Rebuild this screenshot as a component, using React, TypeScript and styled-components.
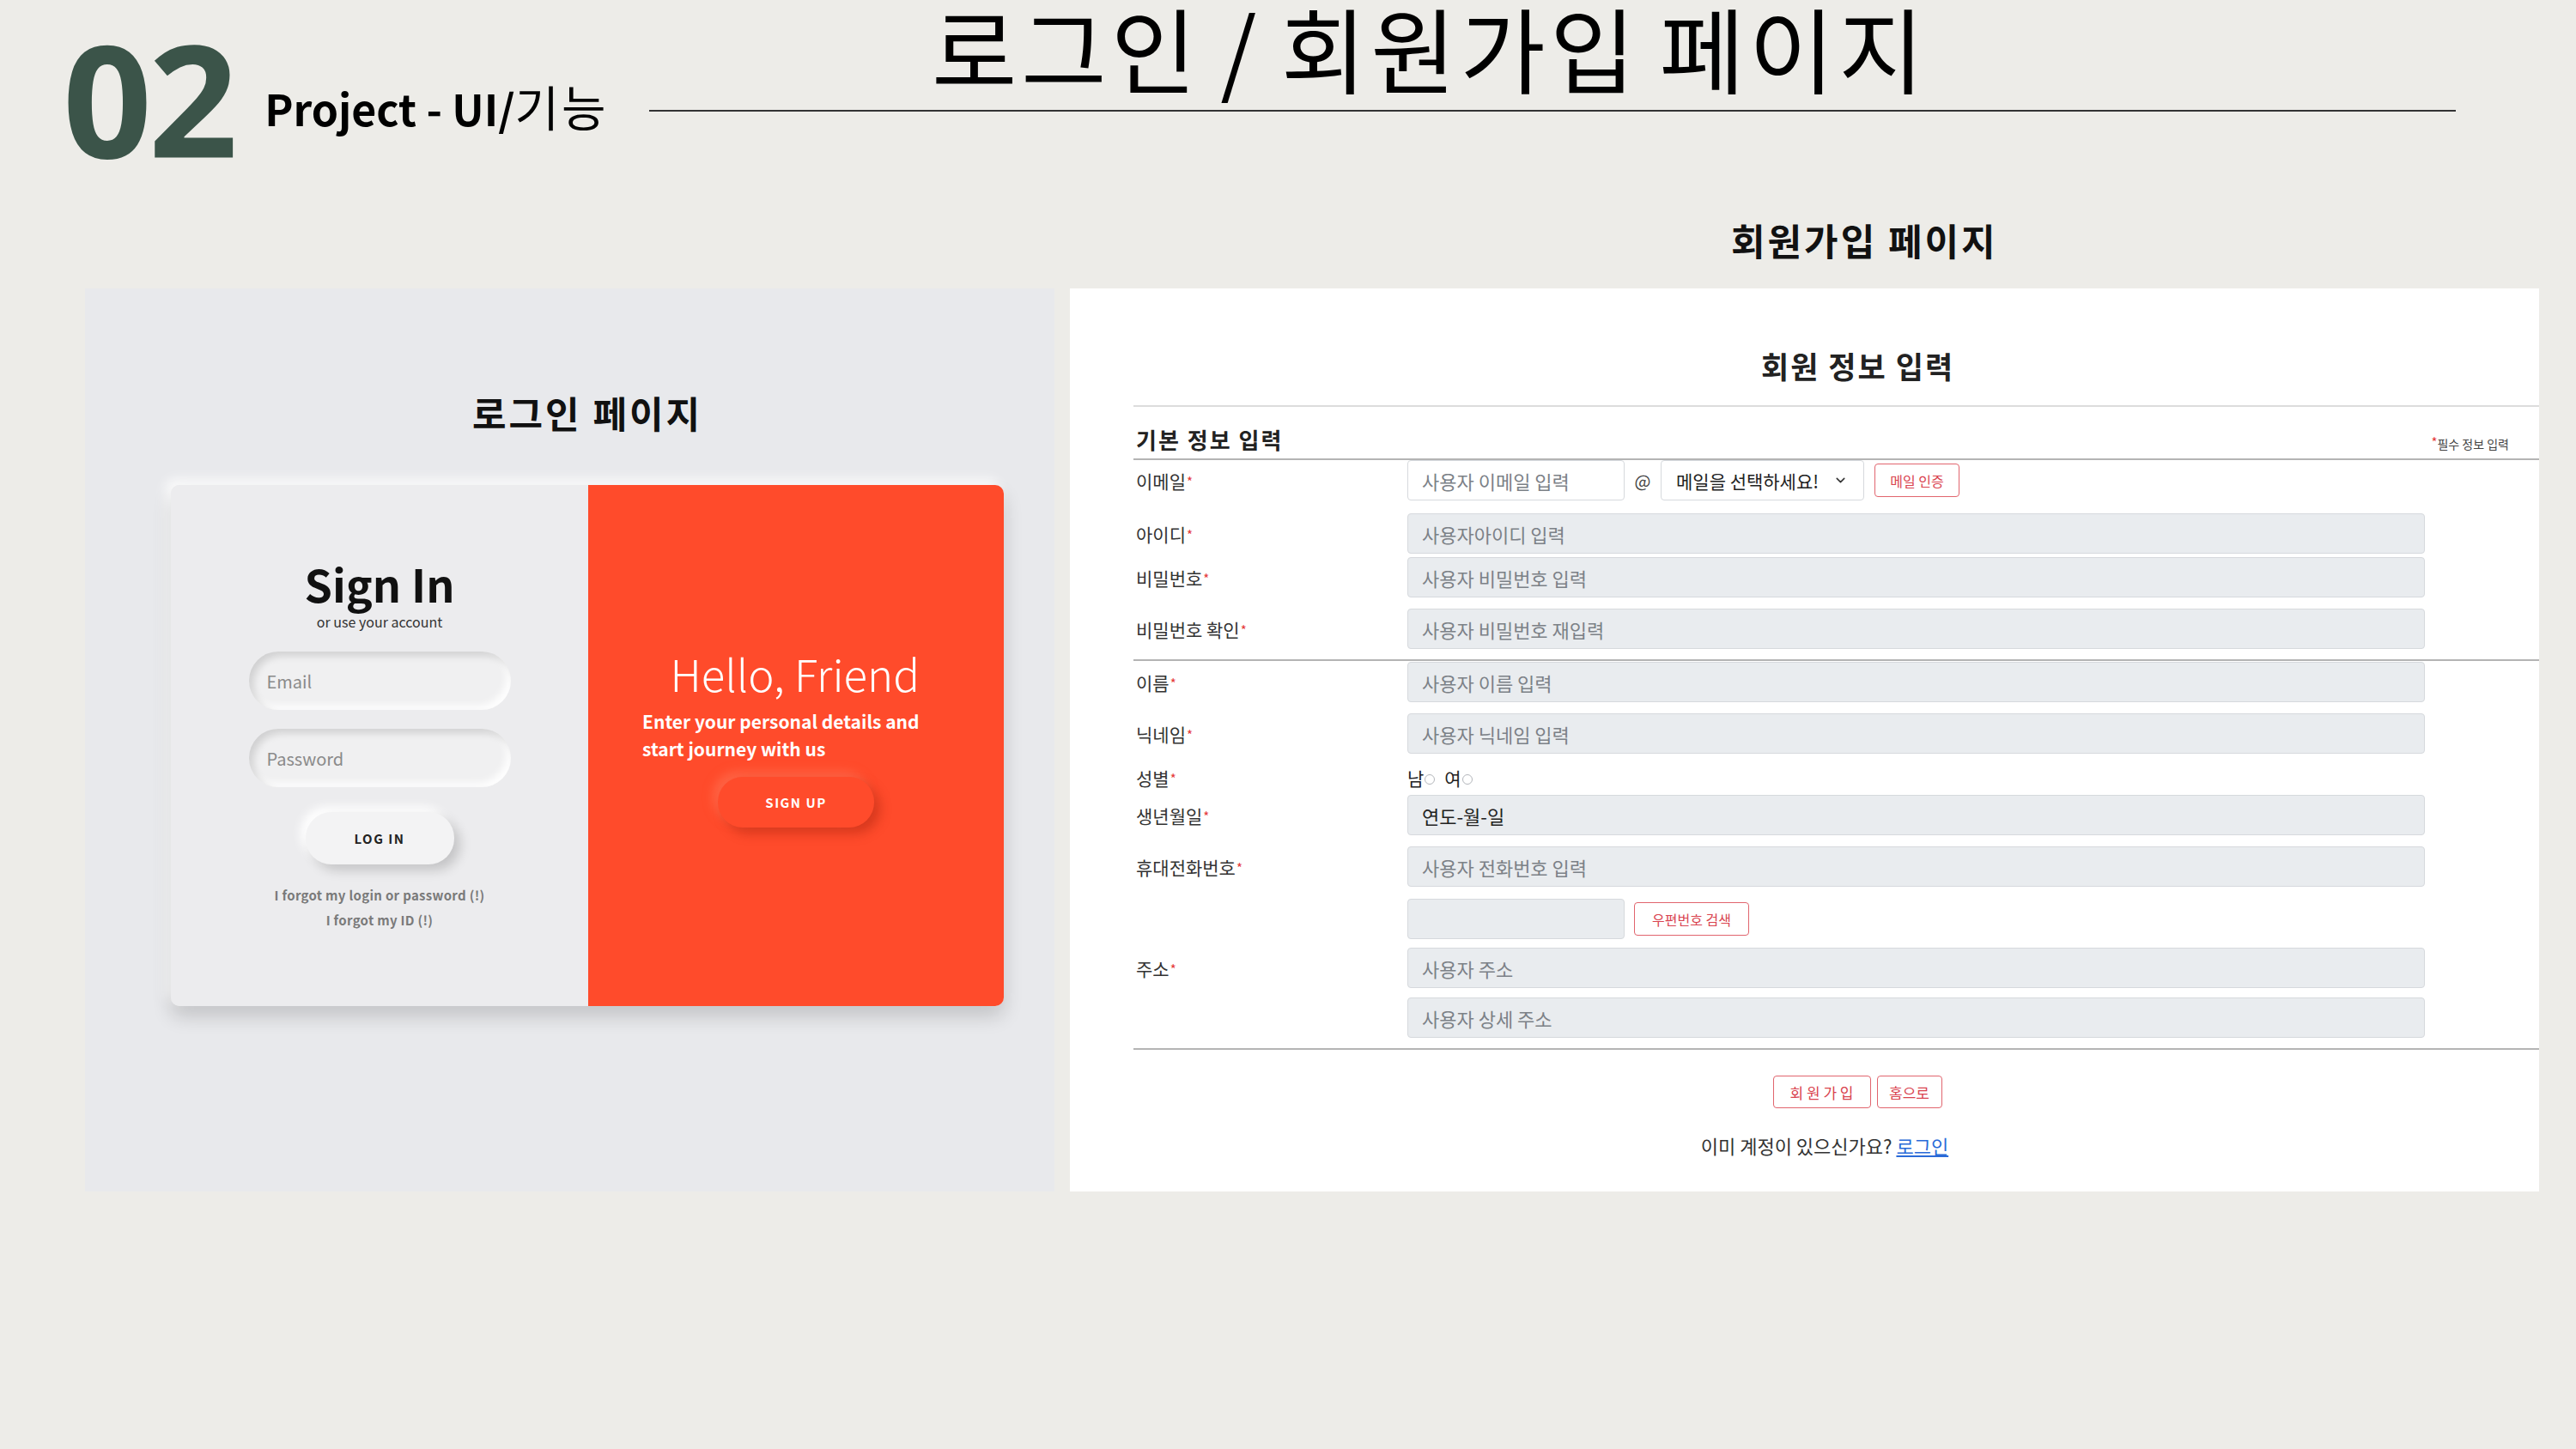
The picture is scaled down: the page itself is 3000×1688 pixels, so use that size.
import styled, { createGlobalStyle } from 'styled-components';
import { ChevronDown } from 'lucide-react';

const KR = `"Noto Sans CJK KR", "Noto Sans", sans-serif`;

const GlobalStyle = createGlobalStyle`
  html, body {
    margin: 0;
    padding: 0;
    background: #edece8;
  }
  * {
    box-sizing: border-box;
  }
`;

const Page = styled.div`
  width: 3000px;
  height: 1688px;
  overflow: hidden;
  background: #edece8;
  font-family: ${KR};
  color: #111;
`;

/* ---------- header ---------- */

const Header = styled.header`
  display: flex;
  align-items: flex-start;
  height: 204px;
  padding: 22px 140px 0 73px;
`;

const ChapterNum = styled.div`
  font-family: 'Open Sans', sans-serif;
  font-weight: 700;
  font-size: 182px;
  line-height: 182px;
  letter-spacing: -4px;
  color: #3b5449;
`;

const ChapterLabel = styled.div`
  margin: 76px 0 0 35px;
  font-size: 50px;
  line-height: 50px;
  font-weight: 700;
  white-space: nowrap;
  color: #000;

  span {
    font-size: 56px;
    font-weight: 400;
    letter-spacing: 3px;
  }
`;

const TitleRule = styled.div`
  margin: -20px 0 0 auto;
  width: 2104px;
  display: flex;
  flex-direction: column;
`;

const PageTitle = styled.h1`
  margin: 0;
  padding-left: 329px;
  font-size: 108px;
  line-height: 104px;
  font-weight: 400;
  letter-spacing: 5px;
  word-spacing: -6px;
  white-space: nowrap;
  color: #000;
`;

const Rule = styled.div`
  margin-top: 22px;
  height: 2px;
  background: #333;
`;

/* ---------- main ---------- */

const Main = styled.main`
  display: grid;
  grid-template-columns: 1129px 1711px;
  column-gap: 18px;
  row-gap: 35px;
  margin-top: 53px;
  padding-left: 99px;
`;

const SectionCaption = styled.h2`
  grid-column: 2;
  grid-row: 1;
  margin: 0;
  padding-left: 770px;
  font-size: 43px;
  line-height: 44px;
  font-weight: 700;
  letter-spacing: 3px;
  color: #111;
`;

/* ---------- login side ---------- */

const LoginStage = styled.section`
  grid-column: 1;
  grid-row: 2;
  height: 1052px;
  background: #e8e9ec;
  padding: 123px 0 0 100px;
`;

const StageTitle = styled.h3`
  width: 970px;
  margin: 0;
  text-align: center;
  font-size: 43px;
  line-height: 43px;
  font-weight: 700;
  letter-spacing: 3px;
  color: #111;
`;

const AuthCard = styled.div`
  margin-top: 63px;
  width: 970px;
  height: 607px;
  display: grid;
  grid-template-columns: 486px 484px;
  border-radius: 10px;
  overflow: hidden;
  box-shadow: 0 12px 22px rgba(0, 0, 0, 0.16), -6px -6px 14px rgba(255, 255, 255, 0.95);
`;

const SignInPane = styled.div`
  display: flex;
  flex-direction: column;
  align-items: center;
  padding-top: 89px;
  background: #ececee;
`;

const SignInTitle = styled.div`
  font-size: 52px;
  line-height: 52px;
  font-weight: 700;
  color: #111;
`;

const SmallNote = styled.div`
  margin-top: 9px;
  font-size: 16px;
  line-height: 18px;
  color: #333;
`;

const PillInput = styled.input<{ $top: number }>`
  margin-top: ${({ $top }) => $top}px;
  width: 305px;
  height: 68px;
  border: none;
  outline: none;
  border-radius: 34px;
  padding: 0 21px;
  background: #f0f0f1;
  font-family: ${KR};
  font-size: 20px;
  color: #333;
  box-shadow: inset 5px 5px 9px rgba(0, 0, 0, 0.13), inset -5px -5px 9px rgba(255, 255, 255, 0.95);

  &::placeholder {
    color: #8a8a8a;
  }
`;

const SoftButton = styled.button`
  margin-top: 29px;
  width: 173px;
  height: 61px;
  border: none;
  border-radius: 30px;
  background: #f3f3f4;
  font-family: ${KR};
  font-size: 15px;
  font-weight: 700;
  letter-spacing: 1.5px;
  color: #222;
  box-shadow: 7px 7px 13px rgba(0, 0, 0, 0.17), -6px -6px 12px rgba(255, 255, 255, 1);
`;

const ForgotLink = styled.div<{ $top: number }>`
  margin-top: ${({ $top }) => $top}px;
  font-size: 15px;
  line-height: 20px;
  font-weight: 700;
  letter-spacing: 0.3px;
  color: #7a7a7a;
`;

const WelcomePane = styled.div`
  display: flex;
  flex-direction: column;
  padding-top: 192px;
  background: #ff4b2b;
  color: #fff;
`;

const WelcomeText = styled.div`
  margin-left: 63px;
  width: 323px;
`;

const Hello = styled.div`
  text-align: right;
  font-size: 51px;
  line-height: 54px;
  font-weight: 300;
  white-space: nowrap;
`;

const WelcomeBody = styled.p`
  margin: 13px 0 0;
  font-size: 21px;
  line-height: 32px;
  font-weight: 700;
  white-space: nowrap;
`;

const GhostButton = styled.button`
  align-self: center;
  margin-top: 17px;
  width: 182px;
  height: 59px;
  border: none;
  border-radius: 29px;
  background: #ff4b2b;
  color: #fff;
  font-family: ${KR};
  font-size: 15px;
  font-weight: 700;
  letter-spacing: 1.5px;
  box-shadow: 7px 7px 13px rgba(150, 30, 10, 0.38), -6px -6px 12px rgba(255, 120, 90, 0.55);
`;

/* ---------- sign up side ---------- */

const SignupSheet = styled.section`
  grid-column: 2;
  grid-row: 2;
  height: 1052px;
  background: #fff;
  padding: 72px 0 0 74px;
  display: flex;
  flex-direction: column;
`;

const SheetTitle = styled.h3`
  margin: 0;
  padding-left: 731px;
  font-size: 35px;
  line-height: 35px;
  font-weight: 700;
  letter-spacing: 2px;
  color: #222;
`;

const Divider = styled.div<{ $top: number; $tone: 'light' | 'mid' }>`
  margin-top: ${({ $top }) => $top}px;
  height: 2px;
  background: ${({ $tone }) => ($tone === 'light' ? '#dcdcdc' : '#b4b4b4')};
`;

const GroupHead = styled.div`
  display: flex;
  align-items: baseline;
  justify-content: space-between;
  margin-top: 25px;
  padding: 0 35px 0 3px;
`;

const GroupTitle = styled.div`
  font-size: 26px;
  line-height: 26px;
  font-weight: 700;
  letter-spacing: 2px;
  color: #222;
`;

const RequiredNote = styled.div`
  font-size: 14px;
  color: #444;
`;

const Req = styled.span`
  color: #e53a3a;
  font-size: 15px;
  vertical-align: 2px;
  margin-left: 1px;
`;

const FieldRow = styled.div<{ $top: number }>`
  display: grid;
  grid-template-columns: 319px 1185px;
  align-items: center;
  min-height: 47px;
  margin-top: ${({ $top }) => $top}px;
`;

const FieldLabel = styled.div`
  padding-left: 3px;
  font-size: 21px;
  color: #333;
`;

const FieldLine = styled.div`
  display: flex;
  align-items: center;
`;

const TextBox = styled.input<{ $short?: boolean; $plain?: boolean }>`
  width: ${({ $short }) => ($short ? '253px' : '1185px')};
  height: 47px;
  padding: 0 16px;
  border: 1px solid #d6d9dd;
  border-radius: 4px;
  outline: none;
  background: ${({ $plain }) => ($plain ? '#fff' : '#e9ecef')};
  font-family: ${KR};
  font-size: 22px;
  color: #222;

  &::placeholder {
    color: #7c8187;
  }
`;

const AtMark = styled.span`
  width: 42px;
  text-align: center;
  font-size: 20px;
  color: #444;
`;

const SelectBox = styled.div`
  display: flex;
  align-items: center;
  justify-content: space-between;
  width: 237px;
  height: 47px;
  padding: 0 18px 0 17px;
  border: 1px solid #d6d9dd;
  border-radius: 4px;
  font-size: 21px;
  color: #222;
`;

const OutlineButton = styled.button<{ $w: number; $h?: number; $size?: number }>`
  width: ${({ $w }) => $w}px;
  height: ${({ $h }) => $h ?? 39}px;
  padding: 0;
  border: 1.5px solid #e1656e;
  border-radius: 4px;
  background: #fff;
  color: #d9434f;
  font-family: ${KR};
  font-size: ${({ $size }) => $size ?? 16}px;
  white-space: nowrap;
`;

const Radios = styled.div`
  display: flex;
  align-items: center;
  font-size: 21px;
  color: #222;
`;

const RadioDot = styled.span`
  display: inline-block;
  width: 12px;
  height: 12px;
  margin: 3px 11px 0 1px;
  border: 1.5px solid #b4b7bc;
  border-radius: 50%;
  background: #fff;
`;

const ActionRow = styled.div`
  display: flex;
  justify-content: center;
  gap: 7px;
  margin-top: 30px;
  padding-left: 49px;
`;

const LoginHint = styled.div`
  margin-top: 31px;
  padding-right: 27px;
  text-align: center;
  font-size: 22px;
  line-height: 24px;
  color: #333;

  a {
    color: #2a6ad8;
    text-decoration: underline;
  }
`;

const rowsTop = [
  { label: '아이디', placeholder: '사용자아이디 입력', top: 15 },
  { label: '비밀번호', placeholder: '사용자 비밀번호 입력', top: 4 },
  { label: '비밀번호 확인', placeholder: '사용자 비밀번호 재입력', top: 13 },
];

export default function App() {
  return (
    <Page>
      <GlobalStyle />
      <Header>
        <ChapterNum>02</ChapterNum>
        <ChapterLabel>
          Project - UI/<span>기능</span>
        </ChapterLabel>
        <TitleRule>
          <PageTitle>로그인 / 회원가입 페이지</PageTitle>
          <Rule />
        </TitleRule>
      </Header>

      <Main>
        <SectionCaption>회원가입 페이지</SectionCaption>

        <LoginStage>
          <StageTitle>로그인 페이지</StageTitle>
          <AuthCard>
            <SignInPane>
              <SignInTitle>Sign In</SignInTitle>
              <SmallNote>or use your account</SmallNote>
              <PillInput $top={26} placeholder="Email" readOnly />
              <PillInput $top={22} placeholder="Password" readOnly />
              <SoftButton>LOG IN</SoftButton>
              <ForgotLink $top={26}>I forgot my login or password (!)</ForgotLink>
              <ForgotLink $top={9}>I forgot my ID (!)</ForgotLink>
            </SignInPane>
            <WelcomePane>
              <WelcomeText>
                <Hello>Hello, Friend</Hello>
                <WelcomeBody>
                  Enter your personal details and
                  <br />
                  start journey with us
                </WelcomeBody>
              </WelcomeText>
              <GhostButton>SIGN UP</GhostButton>
            </WelcomePane>
          </AuthCard>
        </LoginStage>

        <SignupSheet>
          <SheetTitle>회원 정보 입력</SheetTitle>
          <Divider $top={29} $tone="light" />
          <GroupHead>
            <GroupTitle>기본 정보 입력</GroupTitle>
            <RequiredNote>
              <Req>*</Req>필수 정보 입력
            </RequiredNote>
          </GroupHead>
          <Divider $top={7} $tone="mid" />

          <FieldRow $top={0}>
            <FieldLabel>
              이메일<Req>*</Req>
            </FieldLabel>
            <FieldLine>
              <TextBox $short $plain placeholder="사용자 이메일 입력" readOnly />
              <AtMark>@</AtMark>
              <SelectBox>
                메일을 선택하세요!
                <ChevronDown size={17} strokeWidth={2.2} color="#333" />
              </SelectBox>
              <OutlineButton $w={99} style={{ marginLeft: 12 }}>
                메일 인증
              </OutlineButton>
            </FieldLine>
          </FieldRow>

          {rowsTop.map((r) => (
            <FieldRow key={r.label} $top={r.top}>
              <FieldLabel>
                {r.label}
                <Req>*</Req>
              </FieldLabel>
              <TextBox placeholder={r.placeholder} readOnly />
            </FieldRow>
          ))}

          <Divider $top={12} $tone="mid" />

          <FieldRow $top={1}>
            <FieldLabel>
              이름<Req>*</Req>
            </FieldLabel>
            <TextBox placeholder="사용자 이름 입력" readOnly />
          </FieldRow>
          <FieldRow $top={13}>
            <FieldLabel>
              닉네임<Req>*</Req>
            </FieldLabel>
            <TextBox placeholder="사용자 닉네임 입력" readOnly />
          </FieldRow>
          <FieldRow $top={13} style={{ minHeight: 24 }}>
            <FieldLabel>
              성별<Req>*</Req>
            </FieldLabel>
            <Radios>
              남<RadioDot />
              여<RadioDot />
            </Radios>
          </FieldRow>
          <FieldRow $top={5}>
            <FieldLabel>
              생년월일<Req>*</Req>
            </FieldLabel>
            <TextBox defaultValue="연도-월-일" readOnly />
          </FieldRow>
          <FieldRow $top={13}>
            <FieldLabel>
              휴대전화번호<Req>*</Req>
            </FieldLabel>
            <TextBox placeholder="사용자 전화번호 입력" readOnly />
          </FieldRow>
          <FieldRow $top={14}>
            <FieldLabel />
            <FieldLine>
              <TextBox $short readOnly />
              <OutlineButton $w={134} style={{ marginLeft: 11 }}>
                우편번호 검색
              </OutlineButton>
            </FieldLine>
          </FieldRow>
          <FieldRow $top={10}>
            <FieldLabel>
              주소<Req>*</Req>
            </FieldLabel>
            <TextBox placeholder="사용자 주소" readOnly />
          </FieldRow>
          <FieldRow $top={11}>
            <FieldLabel />
            <TextBox placeholder="사용자 상세 주소" readOnly />
          </FieldRow>

          <Divider $top={12} $tone="mid" />

          <ActionRow>
            <OutlineButton $w={114} $h={38} $size={17}>
              회 원 가 입
            </OutlineButton>
            <OutlineButton $w={76} $h={38} $size={17}>
              홈으로
            </OutlineButton>
          </ActionRow>
          <LoginHint>
            이미 계정이 있으신가요? <a href="#">로그인</a>
          </LoginHint>
        </SignupSheet>
      </Main>
    </Page>
  );
}
